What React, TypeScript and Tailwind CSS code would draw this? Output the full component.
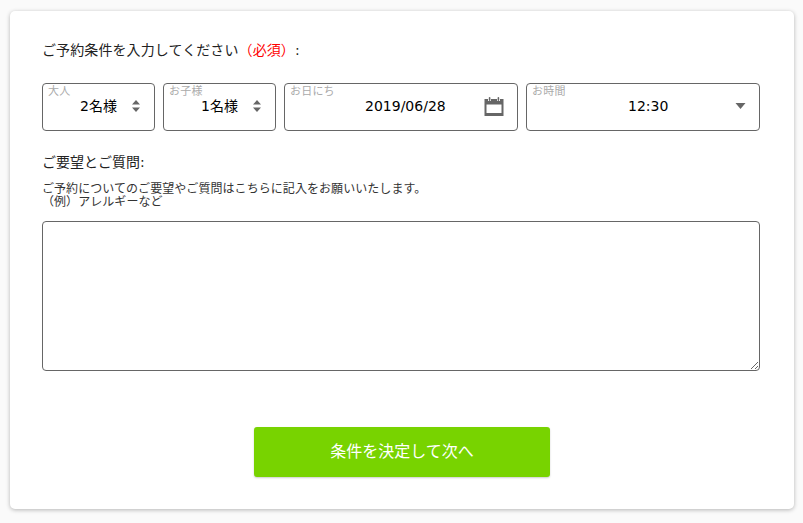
const FONT = "font-['DejaVu_Sans','Noto_Sans_CJK_JP',sans-serif]"

function Stepper() {
  return (
    <svg width="10" height="14" viewBox="0 0 10 14" className="shrink-0">
      <path d="M5 1 L9 5.5 H1 Z M1 8.5 H9 L5 13 Z" fill="#666666" />
    </svg>
  )
}

function CalendarIcon() {
  return (
    <svg width="20" height="20" viewBox="0 0 20 20" className="shrink-0">
      <path
        fillRule="evenodd"
        d="M0.5 3 H4 V5 H7 V3 H13 V5 H16 V3 H19.5 V20 H0.5 Z M2.5 8.5 V17 H17.5 V8.5 Z"
        fill="#666666"
      />
      <rect x="4.8" y="1" width="1.6" height="4" rx="0.8" fill="#666666" />
      <rect x="13.6" y="1" width="1.6" height="4" rx="0.8" fill="#666666" />
    </svg>
  )
}

function Caret() {
  return (
    <svg width="12" height="8" viewBox="0 0 12 8" className="shrink-0">
      <path d="M0.5 1 H10.5 L5.5 7 Z" fill="#666666" />
    </svg>
  )
}

function Field({ label, value, icon, valueClass }: { label: string; value: string; icon: React.ReactNode; valueClass: string }) {
  return (
    <div className="relative h-12 rounded-[4px] border border-[#666666] bg-white">
      <span className="absolute left-[5px] top-px text-[11px] leading-[14px] tracking-[0.2px] text-[#aaaaaa]">{label}</span>
      <div className="flex h-[44px] items-center">
        <span className={`whitespace-nowrap text-[14px] text-black ${valueClass}`}>{value}</span>
        {icon}
      </div>
    </div>
  )
}

export default function App() {
  return (
    <div className={`min-h-[523px] bg-[#fafafa] pb-[14px] pl-[10px] pr-[9px] pt-[11px] ${FONT}`}>
      <div className="h-[498px] rounded-[5px] bg-white px-[32px] pt-[30px] shadow-[0_1px_4px_rgba(0,0,0,0.28)]">
        <p className="text-[14px] leading-[18px] tracking-[0.1px] text-[#222222]">
          ご予約条件を入力してください<span className="text-[#ff0000]">（必須）</span>:
        </p>

        <div className="mt-[24px] grid grid-cols-[113px_113px_234px_234px] gap-2">
          <Field label="大人" value="2名様" valueClass="ml-[37px] mr-[14px]" icon={<Stepper />} />
          <Field label="お子様" value="1名様" valueClass="ml-[37px] mr-[14px]" icon={<Stepper />} />
          <Field label="お日にち" value="2019/06/28" valueClass="ml-[80px] mr-[38px]" icon={<CalendarIcon />} />
          <Field label="お時間" value="12:30" valueClass="ml-[101px] mr-[67px]" icon={<Caret />} />
        </div>

        <p className="mt-[22px] text-[14px] leading-[18px] text-[#222222]">ご要望とご質問:</p>
        <p className="mt-[12px] text-[12px] leading-[13px] tracking-[0.06px] text-[#333333]">
          ご予約についてのご要望やご質問はこちらに記入をお願いいたします。
          <br />
          （例）アレルギーなど
        </p>

        <textarea className="mt-[12px] block h-[150px] w-[718px] rounded-[4px] border border-[#666666] bg-white" />

        <div className="mt-[56px] flex justify-center">
          <button className="h-[50px] w-[296px] rounded-[3px] bg-[#78d300] text-[16px] text-white shadow-[0_1px_2px_rgba(0,0,0,0.2)]">
            条件を決定して次へ
          </button>
        </div>
      </div>
    </div>
  )
}
